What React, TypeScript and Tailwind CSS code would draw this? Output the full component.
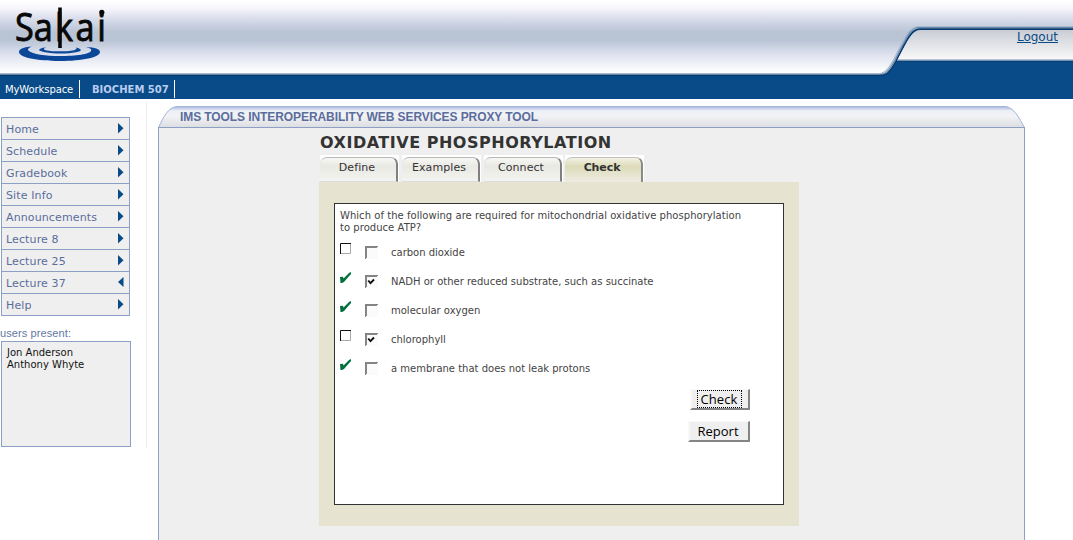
import React from "react";

const menu = ["Home", "Schedule", "Gradebook", "Site Info", "Announcements", "Lecture 8", "Lecture 25", "Lecture 37", "Help"];

const answers = [
  { text: "carbon dioxide", correct: false, checked: false },
  { text: "NADH or other reduced substrate, such as succinate", correct: true, checked: true },
  { text: "molecular oxygen", correct: true, checked: false },
  { text: "chlorophyll", correct: false, checked: true },
  { text: "a membrane that does not leak protons", correct: true, checked: false },
];

const tabs = ["Define", "Examples", "Connect", "Check"];

function Logo() {
  return (
    <svg width="100" height="62" viewBox="10 2 100 62" className="block overflow-visible" role="img" aria-label="Sakai">
      <path fillRule="evenodd" fill="#0b4799" d="M19 52C19 48.500 25 47 32 46.500C28 48 27 49.500 29 51C32 54 46 56 60 56C76 56 90 54 91 51C92 49 90 48 86 47C95 47.500 100 49 100 52C100 57.500 82 61 60 61C37 61 19 57.500 19 52Z" />
      <path fill="#0b4799" d="M42 48C37 50 39 51 45 52.200C54 54 68 54 76 52.200C83 51 82 49 76 47.500C78 49.500 74 50.500 69 51C62 51.500 51 51.500 47 50.500C43 49.500 43 48.500 46 47.500C44 47.500 43 47.700 42 48Z" />
      <text transform="scale(.9 1)" x="16.800 37.400 61 84 108" y="41" fontFamily="Open Sans" fontSize="38" fill="#080808" stroke="#080808" strokeWidth=".9">Sakai</text>
      <path d="M60 7.500V48" stroke="#080808" strokeWidth="3.600" />
      <circle cx="101.800" cy="12.300" r="2.600" fill="#080808" />
    </svg>
  );
}

function Swoosh() {
  return (
    <svg width="193" height="76" viewBox="880 0 193 76" className="block">
      <defs>
        <linearGradient id="inset" x1="0" y1="30" x2="0" y2="60" gradientUnits="userSpaceOnUse">
          <stop offset="0" stopColor="#c9cdd4" />
          <stop offset="1" stopColor="#fafafa" />
        </linearGradient>
      </defs>
      <path d="M880 76C888 75 892 68 896 61L903 47C908 38 912 29 920 29H1073V76Z" fill="#084b88" />
      <path d="M897 60L904 47C909 38 913 30 920 30H1073V60Z" fill="url(#inset)" />
      <path d="M878 73.500H880C886 73 890 66 894 59L901 45C906 36 910 26.500 919 26.500H1073" fill="none" stroke="#a9b9cf" strokeWidth="1.200" />
      <path d="M878 74.500H881C887 74 891 67 895 60L902 46C907 37 911 27.500 919 27.500H1073" fill="none" stroke="#6688ad" strokeWidth="1.200" />
      <path d="M878 75.500H882C888 75 892 68 896 61L903 47C908 38 912 29 920 29H1073" fill="none" stroke="#07396b" strokeWidth="1.400" />
      <path d="M898 59.500H1073" stroke="#b5c3d3" />
      <path d="M897 60.500H1073" stroke="#6f92b5" />
      <path d="M896 61.500H1073" stroke="#083f75" />
    </svg>
  );
}

function Check({ checked }: { checked: boolean }) {
  return (
    <svg width="13" height="13" className="block shrink-0">
      <path d="M0 0H13V13H0Z" fill="#fbfbfb" />
      <path d="M0 13V0H13V1H12V2H2V12H1V13Z" fill="#848484" />
      {checked && <path d="M3.200 5.500L5.500 8.200L9 4.500" fill="none" stroke="#111" strokeWidth="1.900" />}
    </svg>
  );
}

function Mark({ correct }: { correct: boolean }) {
  return correct ? (
    <svg width="12" height="12" viewBox="0 0 12 12" className="block shrink-0">
      <path d="M0 5L3 4.700L3.500 6.500L9 1L11 0V2L7 6.500L4 10L2 11H0.500Z" fill="#00713d" />
    </svg>
  ) : (
    <svg width="12" height="12" className="block shrink-0">
      <path d="M.5 11V.5H11" fill="none" stroke="#111" />
      <path d="M1 10.500H10.500V1" fill="none" stroke="#aaa" />
    </svg>
  );
}

function Tab({ label, active }: { label: string; active: boolean }) {
  return (
    <div className={active ? "-ml-px h-[27px] w-[79px] shrink-0 bg-white pt-[2px]" : "h-[27px] w-[79px] shrink-0 bg-white pt-[2px]"}>
      <div
        className={
          active
            ? "h-[25px] w-[78px] rounded-tl-[7px] rounded-tr-[7px] border-t border-r-2 border-t-[#c0c0c0] border-r-[#8a8a84] bg-linear-to-b from-[#f3f2e4] via-[#dddbb9] via-35% to-[#eeece2] pt-px pr-[2px] text-center text-[11px] leading-[18px] font-bold tracking-[-0.1px] text-[#333]"
            : "h-[25px] w-[78px] rounded-tl-[7px] rounded-tr-[7px] border-t border-r-2 border-b border-t-[#b8b8b8] border-r-[#808080] border-b-[#ddd] bg-linear-to-b from-[#f7f7f4] via-[#e9e9e4] via-35% to-[#f3f3ef] pt-px pr-[2px] text-center text-[11px] leading-[18px] tracking-[0.08px] text-[#333]"
        }
      >
        {label}
      </div>
    </div>
  );
}

export default function App() {
  return (
    <div className="flex h-[540px] w-[1073px] flex-col overflow-hidden bg-white font-['DejaVu_Sans',sans-serif] text-[#333]">
      <header className="flex h-[76px] shrink-0 justify-between bg-[linear-gradient(to_bottom,#fff_0px,#f7f7fc_8px,#d8dcea_19px,#b9c4d5_32px,#b9c4d5_40px,#dde1ee_54px,#fff_72px,#fff_73px,#a9b9cf_73px,#a9b9cf_74px,#6688ad_74px,#6688ad_75px,#07396b_75px)]">
        <div className="pt-[2px] pl-[10px]"><Logo /></div>
        <div className="relative">
          <Swoosh />
          <a href="#" className="absolute top-[29px] right-[15px] text-[12px] leading-[16px] text-[#0b4b86] underline">Logout</a>
        </div>
      </header>
      <nav className="flex h-[23px] shrink-0 items-center bg-[#084b88] pt-[3px] text-[10px] text-white">
        <div className="flex h-[18px] w-[80px] items-center border-r border-white pl-[5px] tracking-[-0.1px] whitespace-nowrap">MyWorkspace</div>
        <div className="flex h-[18px] w-[95px] items-center border-r border-white pl-[12px] font-bold whitespace-nowrap text-[#b9cdf0]">BIOCHEM 507</div>
      </nav>

      <div className="flex min-h-0 flex-1">
        <aside className="mt-[3px] h-[346px] w-[147px] shrink-0 border-r border-[#eee] pt-[15px]">
          <ul className="ml-px w-[129px] border border-b-0 border-[#8c9fc4] bg-[#efefef]">
            {menu.map((m) => (
              <li key={m} className="flex h-[22px] items-center justify-between border-b border-[#8c9fc4] pr-[4px] pl-[4px] text-[11px] tracking-[0.12px] text-[#5a6d9c]">
                <span className="pt-[3px]">{m}</span>
                <svg width="7" height="11" viewBox="0 0 7 11">
                  <path d={m === "Lecture 37" ? "M5.500 0V10L0 5Z" : "M0 0V10.500L5.500 5.200Z"} fill="#084b88" />
                </svg>
              </li>
            ))}
          </ul>
          <div className="mt-[10px] font-['Liberation_Sans',sans-serif] text-[11px] leading-[15px] tracking-[0.1px] text-[#5f78a4]">users present:</div>
          <div className="ml-px h-[106px] w-[130px] border border-[#8c9fc4] bg-[#efefef] pt-[5px] pl-[5px] text-[10px] leading-[12px] text-[#111]">
            <div>Jon Anderson</div>
            <div>Anthony Whyte</div>
          </div>
        </aside>

        <main className="mt-[7px] ml-[11px] flex w-[867px] flex-col">
          <div className="grid h-[22px] shrink-0">
            <svg width="867" height="22" className="col-start-1 row-start-1 block">
              <defs>
                <linearGradient id="title" x1="0" y1="0" x2="0" y2="1">
                  <stop offset="0" stopColor="#a9b8dd" />
                  <stop offset=".1" stopColor="#c8d1e9" />
                  <stop offset=".2" stopColor="#eceff7" />
                  <stop offset=".45" stopColor="#f3f3f6" />
                  <stop offset="1" stopColor="#dcdde1" />
                </linearGradient>
              </defs>
              <path d="M.5 21.500C5 12 10 1 19 .5H847C856 1 861 12 866.500 21.500Z" fill="url(#title)" stroke="#a3b5da" />
              <path d="M0 21.500H867" stroke="#8c9fc4" />
            </svg>
            <h1 className="col-start-1 row-start-1 pl-[22px] font-['Liberation_Sans',sans-serif] text-[12px] leading-[22px] font-bold tracking-[-0.085px] text-[#5a6d9c]">IMS TOOLS INTEROPERABILITY WEB SERVICES PROXY TOOL</h1>
          </div>
          <section className="flex-1 border-x border-[#8c9fc4] bg-[#efefef] pl-[160px]">
            <h2 className="h-[27px] pt-[5px] pl-px text-[16px] leading-[19px] font-bold tracking-[0.52px] whitespace-nowrap text-[#333]">OXIDATIVE PHOSPHORYLATION</h2>
            <div className="flex gap-[3px] pl-px">
              {tabs.map((t) => <Tab key={t} label={t} active={t === "Check"} />)}
            </div>
            <div className="h-[344px] w-[480px] bg-[#e6e4d1] pt-[21px] pl-[15px]">
              <div className="h-[302px] w-[450px] border border-[#333] bg-white pt-[6px] pl-[5px] text-[10px] text-[#444]">
                <p className="leading-[12px] tracking-[0.04px] whitespace-nowrap">
                  Which of the following are required for mitochondrial oxidative phosphorylation
                  <br />
                  to produce ATP?
                </p>
                <ul className="pt-[5px]">
                  {answers.map((a) => (
                    <li key={a.text} className="flex h-[29px] items-start">
                      <div className="pt-[4px]"><Mark correct={a.correct} /></div>
                      <div className="pt-[7px] pl-[13px]"><Check checked={a.checked} /></div>
                      <span className="pt-[7px] pl-[13px] leading-[14px] whitespace-nowrap">{a.text}</span>
                    </li>
                  ))}
                </ul>
                <div className="flex w-[410px] flex-col items-end gap-[10px] pt-[5px] font-['Open_Sans',sans-serif] text-[13px] text-black">
                  <button className="flex h-[21px] w-[60px] items-center justify-center border-t border-r-2 border-b-2 border-l-2 border-t-[#fafafa] border-r-[#848484] border-b-[#848484] border-l-[#f8f8f8] bg-[#efefef] pr-[2px]">
                    <span className="h-[18px] w-[45px] shrink-0 border border-dotted border-black text-center leading-[17px] tracking-[0.1px]">Check</span>
                  </button>
                  <button className="mt-px h-[21px] w-[62px] border-t border-r-2 border-b-2 border-l-2 border-t-[#fafafa] border-r-[#848484] border-b-[#848484] border-l-[#f8f8f8] bg-[#efefef] pr-[2px] leading-[19px]">Report</button>
                </div>
              </div>
            </div>
          </section>
        </main>
      </div>
    </div>
  );
}
